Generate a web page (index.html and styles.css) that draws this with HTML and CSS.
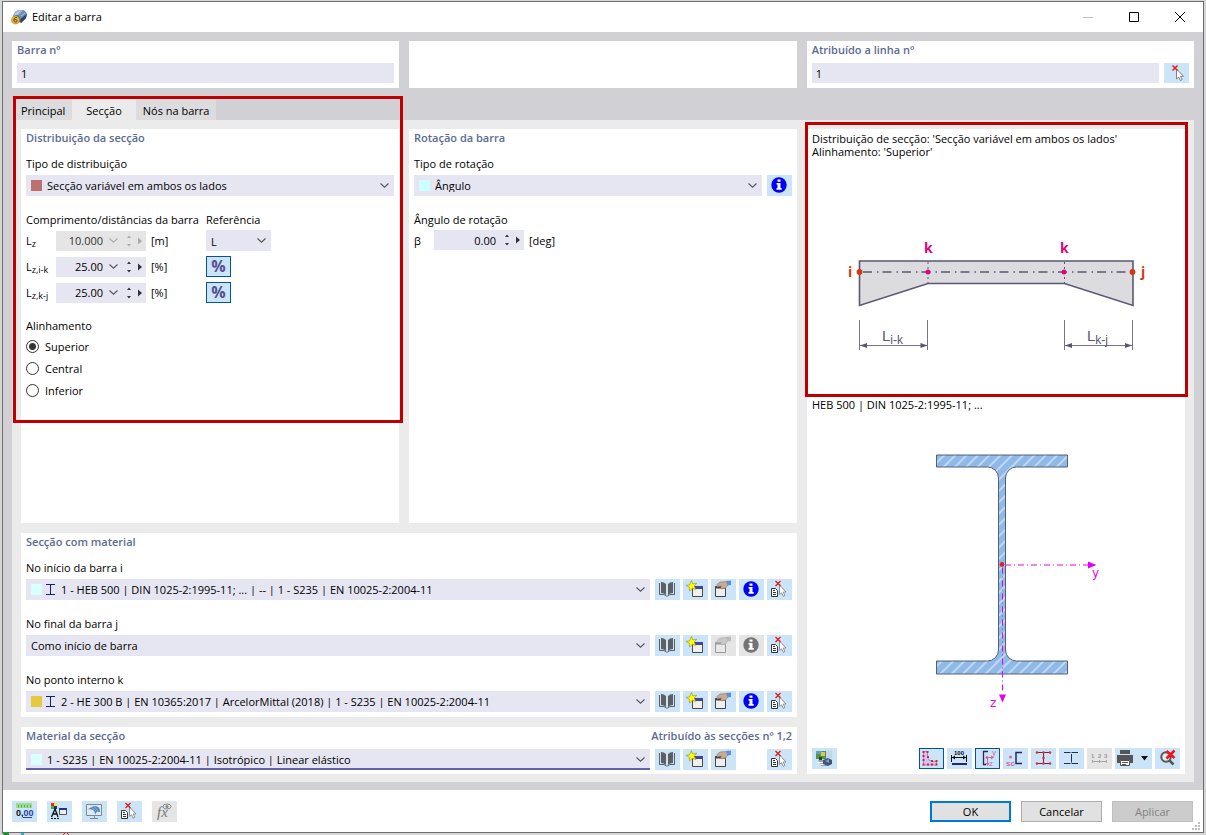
FILE: index.html
```html
<!DOCTYPE html>
<html lang="pt">
<head>
<meta charset="utf-8">
<title>Editar a barra</title>
<link rel="stylesheet" href="styles.css">
</head>
<body>
<svg class="defs" width="0" height="0" aria-hidden="true">
  <symbol id="i-chev" viewBox="0 0 9 5"><path d="M.5 .5 4.5 4.2 8.5 .5" fill="none" stroke="currentColor" stroke-width="1.1"/></symbol>
  <symbol id="i-updown" viewBox="0 0 6 14"><path d="M1 4 3 1.500 5 4zM1 10 3 12.500 5 10z" fill="currentColor"/></symbol>
  <symbol id="i-right" viewBox="0 0 4 8"><path d="M0 0.500 4 4 0 7.500z" fill="currentColor"/></symbol>
  <symbol id="i-ibeam" viewBox="0 0 9 11"><path d="M0 .5h9M0 10.500h9M4.500 .5v10" fill="none" stroke="#1b1b86"/></symbol>
  <symbol id="i-info" viewBox="0 0 25 21"><circle cx="12" cy="10" r="7.700" fill="currentColor"/><path d="M10.500 4.500h3v2.200h-3zM9.500 8h4v5h1.200v1.700h-5.200V13h1V9.600h-1z" fill="#fff"/></symbol>
  <symbol id="i-book" viewBox="0 0 25 21"><path d="M6 3q3 0 5 2v11q-2-2-5-2zM18 3q-3 0-5 2v11q2-2 5-2z" fill="#5d6063"/><path d="M4.500 4v11.500h4.500l2.500 1.500h1l2.500-1.500h4.500V4" fill="none" stroke="#5d6063"/></symbol>
  <symbol id="i-new" viewBox="0 0 25 21"><path d="M9.500 7.500h10v10h-10z" fill="#efefef" stroke="#4a4a4a"/><path d="M9 7h11v3H9z" fill="#4a4a4a"/><path d="M13 7.500h6.500v1.500H13z" fill="#3d3df0"/><path d="M8.500 1.500 9.800 5l4-.8-2.600 3 1.800 3.300-3.700-1.100L6.500 12l-.2-3.800L3 6.500l3.700-.8z" fill="#ff0" stroke="#8a8a30" stroke-width=".6"/></symbol>
  <symbol id="i-edit" viewBox="0 0 25 21"><path d="M4.500 7.500h10v10h-10z" fill="var(--paper,#efefef)" stroke="var(--ink,#444)"/><path d="M4 8.500h11" stroke="var(--ink,#444)" stroke-width="2"/><path d="M6 5.500 9 3l7-.5 1 3.500-3 3.500-2-.5-1 1-1.300-.5.500-2.500L6 8z" fill="var(--skin,#c9aa94)" stroke="var(--ink2,#857468)" stroke-width=".6"/><path d="m15 2 5-.5V6l-3.500.5z" fill="var(--sleeve,#5c93d6)"/></symbol>
  <symbol id="i-cursor" viewBox="0 0 25 21"><path d="M12.500 6v10l2.200-2 1.700 3.500 1.800-.9-1.700-3.300h3z" fill="#fff" stroke="#777" stroke-width=".9"/><path d="m8.500 2.500 5 5m0-5-5 5" stroke="#e02020" stroke-width="1.500"/></symbol>
  <symbol id="i-pick" viewBox="0 0 25 21"><path d="M4.500 9.500h4l2 2v6h-6z" fill="#fff" stroke="#333"/><path d="M6 11.500h2m-2 2h3m-3 2h3" stroke="#333"/><path d="M12.500 6v9.500l2-1.800 1.700 3.600 1.700-.9-1.700-3.400h2.800z" fill="#fff" stroke="#888" stroke-width=".9"/><path d="m8.500 2 5 5m0-5-5 5" stroke="#e01818" stroke-width="1.300"/></symbol>
</svg>

<div class="window">
  <header class="titlebar">
    <svg class="app-icon" viewBox="0 0 16 16" aria-hidden="true"><path d="M2 7Q4 1 9 1l4 .5 3 4.500-1 3-5 5-4-2z" fill="#476287"/><path d="M2 7Q4 1 9 1l4 .5L7 6z" fill="#a6bcd8"/><path d="M7 6q1-4 5-4.500 3.500 0 4 4.500l-6 5z" fill="#6f90bb"/><path d="m9.500 10 6-5-.5 4-5 5z" fill="#2f4566"/><path d="m4 6 5-4m-3 4 5-4m-1 5 4-3" stroke="#d5e0ee" stroke-width=".6"/><circle cx="4.500" cy="11" r="4" fill="#e9bb3c" stroke="#a87f22" stroke-width=".6"/><path d="M6 8.700c-2-.6-3 .6-3 2.300 0 3 3.500 2.500 3 .6-.3-1.500-2.400-1.200-2.800-.2" fill="none" stroke="#5b4411"/></svg>
    <h1 class="title">Editar a barra</h1>
    <div class="win-buttons">
      <button type="button" class="win-btn" aria-label="Minimizar"><svg viewBox="0 0 10 10"><path d="M0 5.500h10" stroke="#bdbdbd"/></svg></button>
      <button type="button" class="win-btn" aria-label="Maximizar"><svg viewBox="0 0 10 10"><path d="M.5 .5h9v9h-9z" fill="none" stroke="#000"/></svg></button>
      <button type="button" class="win-btn" aria-label="Fechar"><svg viewBox="0 0 10 10"><path d="m0 0 10 10M10 0 0 10" stroke="#000"/></svg></button>
    </div>
  </header>

  <main class="content">
    <div class="top-row">
      <section class="card">
        <label class="heading" for="barra">Barra nº</label>
        <div class="line"><input class="text-input" id="barra" value="1"></div>
      </section>
      <section class="card"></section>
      <section class="card">
        <label class="heading" for="linha">Atribuído a linha nº</label>
        <div class="line"><input class="text-input" id="linha" value="1"><button type="button" class="tool" aria-label="Selecionar linha"><svg><use href="#i-cursor"/></svg></button></div>
      </section>
    </div>

    <nav class="tabs">
      <button type="button" class="tab">Principal</button>
      <button type="button" class="tab active">Secção</button>
      <button type="button" class="tab">Nós na barra</button>
    </nav>

    <div class="panel">
      <section class="card dist">
        <h2 class="heading">Distribuição da secção</h2>
        <label class="label first" for="tipo-dist">Tipo de distribuição</label>
        <div class="combo one-mark">
          <select id="tipo-dist"><option>Secção variável em ambos os lados</option></select>
          <span class="marks"><i class="swatch red"></i></span><svg class="chev"><use href="#i-chev"/></svg>
        </div>
        <div class="lengths">
          <span class="label span3">Comprimento/distâncias da barra</span><label class="label" for="ref">Referência</label>
          <label for="lz">L<sub>z</sub></label>
          <div class="spin off"><input id="lz" value="10.000" disabled><svg class="chev"><use href="#i-chev"/></svg><svg class="updown"><use href="#i-updown"/></svg><svg class="right"><use href="#i-right"/></svg></div>
          <span class="unit">[m]</span>
          <div class="combo small"><select id="ref"><option>L</option></select><svg class="chev"><use href="#i-chev"/></svg></div>
          <label for="lzik">L<sub>z,i-k</sub></label>
          <div class="spin"><input id="lzik" value="25.00"><svg class="chev"><use href="#i-chev"/></svg><svg class="updown"><use href="#i-updown"/></svg><svg class="right"><use href="#i-right"/></svg></div>
          <span class="unit">[%]</span>
          <button type="button" class="tool pressed percent">%</button>
          <label for="lzkj">L<sub>z,k-j</sub></label>
          <div class="spin"><input id="lzkj" value="25.00"><svg class="chev"><use href="#i-chev"/></svg><svg class="updown"><use href="#i-updown"/></svg><svg class="right"><use href="#i-right"/></svg></div>
          <span class="unit">[%]</span>
          <button type="button" class="tool pressed percent">%</button>
        </div>
        <fieldset class="align">
          <legend class="label">Alinhamento</legend>
          <label class="radio"><input type="radio" name="al" checked>Superior</label>
          <label class="radio"><input type="radio" name="al">Central</label>
          <label class="radio"><input type="radio" name="al">Inferior</label>
        </fieldset>
        <div class="callout callout-form"></div>
      </section>

      <section class="card">
        <h2 class="heading">Rotação da barra</h2>
        <label class="label first" for="tipo-rot">Tipo de rotação</label>
        <div class="line">
          <div class="combo one-mark">
            <select id="tipo-rot"><option>Ângulo</option></select>
            <span class="marks"><i class="swatch cyan"></i></span><svg class="chev"><use href="#i-chev"/></svg>
          </div>
          <button type="button" class="tool info" aria-label="Informação"><svg><use href="#i-info"/></svg></button>
        </div>
        <div class="angle">
          <span class="label span3">Ângulo de rotação</span>
          <label for="beta">β</label>
          <div class="spin"><input id="beta" value="0.00"><svg class="updown"><use href="#i-updown"/></svg><svg class="right"><use href="#i-right"/></svg></div>
          <span class="unit">[deg]</span>
        </div>
      </section>

      <section class="card wide">
        <h2 class="heading">Secção com material</h2>
        <label class="label first" for="sec-i">No início da barra i</label>
        <div class="line">
          <div class="combo two-marks">
            <select id="sec-i"><option>1 - HEB 500 | DIN 1025-2:1995-11; ... | -- | 1 - S235 | EN 10025-2:2004-11</option></select>
            <span class="marks"><i class="swatch pale"></i><svg class="ibeam"><use href="#i-ibeam"/></svg></span><svg class="chev"><use href="#i-chev"/></svg>
          </div>
          <div class="tools">
            <button type="button" class="tool" aria-label="Biblioteca"><svg><use href="#i-book"/></svg></button>
            <button type="button" class="tool" aria-label="Nova secção"><svg><use href="#i-new"/></svg></button>
            <button type="button" class="tool" aria-label="Editar secção"><svg><use href="#i-edit"/></svg></button>
            <button type="button" class="tool info" aria-label="Informação"><svg><use href="#i-info"/></svg></button>
            <button type="button" class="tool" aria-label="Selecionar"><svg><use href="#i-pick"/></svg></button>
          </div>
        </div>
        <label class="label next" for="sec-j">No final da barra j</label>
        <div class="line">
          <div class="combo">
            <select id="sec-j"><option>Como início de barra</option></select><svg class="chev"><use href="#i-chev"/></svg>
          </div>
          <div class="tools">
            <button type="button" class="tool" aria-label="Biblioteca"><svg><use href="#i-book"/></svg></button>
            <button type="button" class="tool" aria-label="Nova secção"><svg><use href="#i-new"/></svg></button>
            <button type="button" class="tool" disabled aria-label="Editar secção"><svg><use href="#i-edit"/></svg></button>
            <button type="button" class="tool info" disabled aria-label="Informação"><svg><use href="#i-info"/></svg></button>
            <button type="button" class="tool" aria-label="Selecionar"><svg><use href="#i-pick"/></svg></button>
          </div>
        </div>
        <label class="label next" for="sec-k">No ponto interno k</label>
        <div class="line">
          <div class="combo two-marks">
            <select id="sec-k"><option>2 - HE 300 B | EN 10365:2017 | ArcelorMittal (2018) | 1 - S235 | EN 10025-2:2004-11</option></select>
            <span class="marks"><i class="swatch gold"></i><svg class="ibeam"><use href="#i-ibeam"/></svg></span><svg class="chev"><use href="#i-chev"/></svg>
          </div>
          <div class="tools">
            <button type="button" class="tool" aria-label="Biblioteca"><svg><use href="#i-book"/></svg></button>
            <button type="button" class="tool" aria-label="Nova secção"><svg><use href="#i-new"/></svg></button>
            <button type="button" class="tool" aria-label="Editar secção"><svg><use href="#i-edit"/></svg></button>
            <button type="button" class="tool info" aria-label="Informação"><svg><use href="#i-info"/></svg></button>
            <button type="button" class="tool" aria-label="Selecionar"><svg><use href="#i-pick"/></svg></button>
          </div>
        </div>
      </section>

      <section class="card wide">
        <div class="heading-row"><label class="heading" for="mat">Material da secção</label><span class="heading">Atribuído às secções nº 1,2</span></div>
        <div class="line">
          <div class="combo one-mark focused">
            <select id="mat"><option>1 - S235 | EN 10025-2:2004-11 | Isotrópico | Linear elástico</option></select>
            <span class="marks"><i class="swatch pale"></i></span><svg class="chev"><use href="#i-chev"/></svg>
          </div>
          <div class="tools">
            <button type="button" class="tool" aria-label="Biblioteca"><svg><use href="#i-book"/></svg></button>
            <button type="button" class="tool" aria-label="Novo material"><svg><use href="#i-new"/></svg></button>
            <button type="button" class="tool" aria-label="Editar material"><svg><use href="#i-edit"/></svg></button>
            <button type="button" class="tool last" aria-label="Selecionar"><svg><use href="#i-pick"/></svg></button>
          </div>
        </div>
      </section>

      <aside class="card preview">
        <div class="preview-dist">
          <p class="caption">Distribuição de secção: 'Secção variável em ambos os lados'<br>Alinhamento: 'Superior'</p>
          <svg class="drawing" viewBox="807 158 378 239" role="img" aria-label="Secção variável em ambos os lados">
            <path d="M859.500 261h273.500v44.500L1064.500 283.500H928l-68.500 22z" fill="#dcdbe0" stroke="#5a5870" stroke-width="1.600"/>
            <path d="M928 262v21M1064.500 262v21" stroke="#5a5870" stroke-dasharray="2 3"/>
            <path d="M863 272h266" stroke="#5a5870" stroke-width="1.700" stroke-dasharray="9 5 1.500 4"/>
            <circle cx="859.500" cy="272" r="2.900" fill="#d03a10"/><circle cx="1132.500" cy="272" r="2.900" fill="#d03a10"/>
            <circle cx="928" cy="272" r="2.500" fill="#e0047c"/><circle cx="1064" cy="272" r="2.500" fill="#e0047c"/>
            <g class="node-k"><text x="924" y="253">k</text><text x="1060" y="253">k</text></g>
            <g class="node-end"><text x="848" y="277">i</text><text x="1141" y="277">j</text></g>
            <path d="M859.500 320v30M927.500 320v30M1064.500 320v30M1132.500 320v30M860 345.500h67M1065 345.500h67" stroke="#777588"/>
            <path d="m860 345.500 7-2.500v5zM927.500 345.500l-7-2.500v5zM1065 345.500l7-2.500v5zM1132 345.500l-7-2.500v5z" fill="#5a5870"/>
            <g class="dim"><text x="882" y="341">L<tspan class="sub" dy="3">i-k</tspan></text><text x="1087" y="341">L<tspan class="sub" dy="3">k-j</tspan></text></g>
          </svg>
          <div class="callout callout-preview"></div>
        </div>
        <p class="caption">HEB 500 | DIN 1025-2:1995-11; ...</p>
        <svg class="drawing" viewBox="807 415 378 330" role="img" aria-label="HEB 500">
          <defs><pattern id="hatch" width="8" height="8" patternUnits="userSpaceOnUse" patternTransform="translate(1002 460) rotate(45)"><path d="M0 0h8v8H0z" fill="#8fb9e8"/><path d="M4 0v8" stroke="#f2f8ff" stroke-width="1"/></pattern></defs>
          <path d="M936.500 455.500h131v12h-51a11 11 0 0 0-11 11v172a11 11 0 0 0 11 11h51v13h-131v-13h51a11 11 0 0 0 11-11v-172a11 11 0 0 0-11-11h-51z" fill="url(#hatch)" stroke="#55606c"/>
          <path d="M1005 565.500h83M1002.500 568v126" stroke="#e400f0" stroke-dasharray="6 3 1 3"/>
          <path d="m1088 562 8.500 3.500-8.500 3.500zM999 695l3.500 8 3.500-8z" fill="#e400f0"/>
          <circle cx="1002" cy="565" r="2.400" fill="#d8232a"/>
          <g class="axis"><text x="1092" y="577">y</text><text x="990" y="707">z</text></g>
        </svg>
        <div class="preview-tools">
          <button type="button" class="tool" aria-label="Renderização"><svg viewBox="0 0 25 21"><path d="M4 3h10v8H4z" fill="#5c8f4f"/><path d="M4 3h6v3H4z" fill="#54a7b5"/><path d="M9 4h4v4H9z" fill="#d9cc4a"/><path d="M7 9h3v3H7z" fill="#1d4a27"/><path d="M14 2.500h6v8h-6z" fill="#c1d6e8"/><path d="M6 12h9v6H9z" fill="#8da4b8"/><path d="M5 14h9v1H5zM8 16h8v1H8z" fill="#fff"/><path d="m11 12 5-2 4 2v4l-4 2-5-2z" fill="#43566e"/><path d="m13 13 4-2v4z" fill="#6fa0dc"/></svg></button>
          <div class="tools">
            <button type="button" class="tool pressed" aria-label="Contorno"><svg viewBox="0 0 25 21"><path d="M4.500 3.500h4V9q.5 4 5 4.500h4V17h-13z" fill="#cfc3f8" stroke="#8d84b8" stroke-width=".8"/><path d="M3.500 3h2v2h-2zM7.500 3h2v2h-2zM3.500 7h2v2h-2zM3.500 11h2v2h-2zM3.500 15.500h2v2h-2zM8 15.500h2v2H8zM12 15.500h2v2h-2zM16.500 15.500h2v2h-2zM16.500 12h2v2h-2zM12 12h2v2h-2zM8 8h2v2H8z" fill="#e2202c"/></svg></button>
            <button type="button" class="tool" aria-label="Dimensões"><svg viewBox="0 0 25 21"><text class="tiny" x="7" y="7">100</text><path d="M4.500 7v7M19.500 7v7M5 9.500h14" stroke="#111"/><path d="m5 9.500 3-2v4zM19 9.500l-3-2v4z" fill="#111"/><path d="M5 16h15" stroke="#262a5b" stroke-width="2"/></svg></button>
            <button type="button" class="tool pressed" aria-label="Eixos principais"><svg viewBox="0 0 25 21"><path d="M13 3.500H8.500v13H11" fill="none" stroke="#262a5b" stroke-width="1.300"/><path d="M11.500 9.500h6M12.500 9v8" stroke="#cf6aa5"/><path d="m16 7.500 3 2-3 2zM10.500 15l2 3 2-3z" fill="#cf6aa5"/><circle cx="12" cy="9.500" r="1.500" fill="#cf6aa5"/><text class="tiny pink" x="17" y="7">y</text><text class="tiny pink" x="14" y="18">z</text></svg></button>
            <button type="button" class="tool" aria-label="Centro de corte"><svg viewBox="0 0 25 21"><path d="M19 4.500h-6v11h6" fill="none" stroke="#262a5b" stroke-width="1.500"/><circle cx="7.500" cy="9" r="1.500" fill="#cf6aa5"/><text class="tiny pink sc" x="3" y="18">sc</text></svg></button>
            <button type="button" class="tool" aria-label="Pontos"><svg viewBox="0 0 25 21"><path d="M6 4.500h13M6 15.500h13M12.500 4.500v11" stroke="#5b2a4c"/><g fill="#ff2020"><circle cx="6" cy="4.500" r="1.300"/><circle cx="12.500" cy="4.500" r="1.300"/><circle cx="19" cy="4.500" r="1.300"/><circle cx="12.500" cy="10" r="1.300"/><circle cx="6" cy="15.500" r="1.300"/><circle cx="12.500" cy="15.500" r="1.300"/><circle cx="19" cy="15.500" r="1.300"/></g></svg></button>
            <button type="button" class="tool" aria-label="Linhas"><svg viewBox="0 0 25 21"><path d="M5 4.500h6.500M12.500 4.500H19M5 15.500h6.500M12.500 15.500H19M12.500 6v8.500" stroke="#262a5b"/></svg></button>
            <button type="button" class="tool" disabled aria-label="Numeração"><svg viewBox="0 0 25 21"><text class="tiny gray" x="4" y="10">1</text><text class="tiny gray" x="11" y="10">2</text><text class="tiny gray" x="17" y="10">3</text><path d="M5 13.500h15M5.500 12v3M12.500 12v3M19.500 12v3" stroke="#a5a5a5"/></svg></button>
            <button type="button" class="tool print" aria-label="Imprimir"><svg viewBox="0 0 37 21"><path d="M5 2h10v4H5zM2 7h16v8h-3v-3H5v3H2z" fill="#555"/><path d="M5.500 12.500h9v5h-9z" fill="#fff" stroke="#555"/><path d="M7 14.500h6M7 16.500h4" stroke="#555"/><path d="M26 8h7l-3.500 4.500z" fill="#111"/></svg></button>
            <button type="button" class="tool" aria-label="Repor vista"><svg viewBox="0 0 25 21"><circle cx="11" cy="9" r="4.700" fill="#e1edf7" stroke="#555" stroke-width="2"/><path d="m14 12 4.500 4.500" stroke="#555" stroke-width="2.500"/><path d="m11.500 3 8 7m0-7.500-8 8" stroke="#f01414" stroke-width="2.600"/></svg></button>
          </div>
        </div>
      </aside>
    </div>
  </main>

  <footer class="footer">
    <div class="footer-tools">
      <button type="button" class="tool" aria-label="Unidades"><svg viewBox="0 0 25 21"><path d="M4 2h16v5H4z" fill="#9be08c"/><path d="M6.500 4v2.500M9.500 4v2.500M12.500 4v2.500M15.500 4v2.500M18.500 4v2.500" stroke="#55994c" stroke-width=".8"/><text class="digits" x="4" y="15">0,<tspan fill="#2b3f9e">00</tspan></text><path d="M11 16.500h9" stroke="#2b3f9e"/></svg></button>
      <button type="button" class="tool" aria-label="Propriedades de visualização"><svg viewBox="0 0 25 21"><path d="M4 2h3v3H4z" fill="#e22"/><path d="M7 2h3v3H7z" fill="#ee2"/><path d="M4 5h3v3H4z" fill="#3b3"/><path d="M7 5h3v3H7z" fill="#22d"/><path d="m4.500 16 3.500-8 3 8M6 13h4" fill="none" stroke="#111" stroke-width="1.300"/><path d="M4 17.500h9" stroke="#111" stroke-dasharray="2 1"/><path d="M12.500 7.500h7v6h-7z" fill="#eee" stroke="#555"/><path d="M12 8h8" stroke="#22338f" stroke-width="2"/></svg></button>
      <button type="button" class="tool" aria-label="Vista"><svg viewBox="0 0 25 21"><path d="M4.500 3.500h15v11h-15z" fill="#dceafa" stroke="#7e8790"/><path d="M12.500 15v2.500M8 17.500h8" stroke="#7e8790"/><path d="M6 8.500q5-5.500 10-2.500 2 1 2 5l-3-.5-2 3q0-4-3-5-2-.5-4 0z" fill="#5184b8"/><path d="m9 6 5 4m-2-5 4 5" stroke="#a6c8e8" stroke-width=".7"/></svg></button>
      <button type="button" class="tool" aria-label="Selecionar objeto"><svg><use href="#i-pick"/></svg></button>
      <button type="button" class="tool" disabled aria-label="Fórmulas"><svg viewBox="0 0 25 21"><text class="formula" x="5" y="16">fx</text><ellipse cx="15" cy="5.500" rx="4" ry="2.500" fill="none" stroke="#888"/><circle cx="15" cy="5.500" r="1.500" fill="#888"/></svg></button>
    </div>
    <div class="footer-buttons">
      <button type="button" class="btn default">OK</button>
      <button type="button" class="btn">Cancelar</button>
      <button type="button" class="btn" disabled>Aplicar</button>
    </div>
    <svg class="grip" viewBox="0 0 8 8" aria-hidden="true"><path d="M6 0h2v2H6zM3 3h2v2H3zM6 3h2v2H6zM0 6h2v2H0zM3 6h2v2H3zM6 6h2v2H6z" fill="#bdbdbd"/></svg>
  </footer>
</div>
<svg class="backdrop" width="80" height="2" aria-hidden="true"><path d="M0 0h7v2H2z" fill="#0a9a1c"/><path d="M19 0h3v2h-3z" fill="#18b8c0"/><path d="m61 2 2-2m2 0 2 2" stroke="#c22"/></svg>
</body>
</html>
```
FILE: styles.css
```css
* { box-sizing: border-box; }
body {
  margin: 0;
  padding: 1px 2px 0;
  min-height: 100vh;
  display: flex;
  flex-direction: column;
  background: #d6d6d6;
  font: 11px/13px "Open Sans", "Noto Sans", sans-serif;
  color: #000;
}
button, input, select { font: inherit; color: inherit; }
h1, h2, p, fieldset { margin: 0; padding: 0; border: 0; font-weight: normal; }
svg { display: block; }
.defs { position: absolute; }
.backdrop { flex: none; }

.window {
  flex: 1;
  display: flex;
  flex-direction: column;
  background: #fff;
  border: 1px solid #6e6e70;
}
.titlebar { display: flex; align-items: center; height: 30px; padding-left: 8px; gap: 5px; }
.app-icon { width: 16px; height: 16px; }
.title { flex: 1; font-size: 11px; line-height: 16px; }
.win-buttons { display: flex; }
.win-btn { width: 46px; height: 30px; border: 0; background: none; padding: 0; display: grid; place-items: center; }
.win-btn svg { width: 10px; height: 10px; }

.content {
  flex: 1;
  display: flex;
  flex-direction: column;
  background: #d1d0d5;
  padding: 9px 9px 8px;
}
.top-row { display: grid; grid-template-columns: 1fr 1fr 1fr; gap: 10px; }
.card { background: #fff; padding: 0 5px 5px; min-width: 0; }
.heading { display: block; font-size: 11px; font-weight: 600; line-height: 18px; color: #5c6b94; }
.heading-row { display: flex; justify-content: space-between; }
.heading + .line, .heading-row + .line { margin-top: 4px; }
.line { display: flex; gap: 5px; }
.text-input { flex: 1; min-width: 0; height: 20px; border: 0; padding: 0 4px; background: #e6e6f2; }
.top-row .tool { height: 20px; }

.tabs { display: flex; margin-top: 11px; }
.tab { height: 21px; border: 0; padding: 2px 7px 0; background: #dcdcde; text-align: center; }
.tab:first-child { padding-left: 9px; }
.tab.active { background: #ebebeb; padding: 2px 14px 0; }

.panel {
  flex: 1;
  display: grid;
  grid-template-columns: 378fr 388fr 378fr;
  grid-template-rows: 1fr auto auto;
  gap: 10px;
  padding: 9px 9px 8px;
  background: #ebebeb;
}
.wide { grid-column: 1 / 3; }
.wide:last-of-type { padding-bottom: 4px; }
.preview { grid-column: 3; grid-row: 1 / 4; display: flex; flex-direction: column; }
.dist { position: relative; }

.label { display: block; line-height: 21px; }
.label.first { margin-top: 6px; margin-bottom: 1px; }
.label.next { margin-top: 13px; margin-bottom: 1px; }

.combo { flex: 1; min-width: 0; height: 21px; display: grid; align-items: center; background: #e6e6f2; }
.combo > * { grid-area: 1 / 1; }
.combo select { width: 100%; height: 21px; border: 0; padding: 0 20px 1px 5px; background: none; appearance: none; border-radius: 0; }
.combo.small select { padding-top: 1px; padding-bottom: 0; }
.combo.one-mark select { padding-left: 21px; }
.combo.two-marks select { padding-left: 35px; }
.combo.focused { border-bottom: 2px solid #6462ac; }
.marks { justify-self: start; display: flex; align-items: center; gap: 4px; padding-left: 5px; pointer-events: none; }
.swatch { width: 11px; height: 11px; }
.swatch.red { background: #bc7070; }
.swatch.cyan { background: #ccffff; }
.swatch.pale { background: #d9ffff; }
.swatch.gold { background: #e4ca3c; }
.ibeam { width: 9px; height: 11px; }
.chev { width: 9px; height: 5px; color: #555; pointer-events: none; }
.combo .chev { justify-self: end; margin-right: 5px; }

.lengths { display: grid; grid-template-columns: 30px 95px 55px 65px; row-gap: 5px; align-items: center; margin-top: 13px; }
.lengths > .label { margin-bottom: -5px; }
.angle { display: grid; grid-template-columns: 20px 95px auto; row-gap: 0; align-items: center; margin-top: 13px; }
.span3 { grid-column: 1 / 4; white-space: nowrap; }
sub { font-size: 9px; line-height: 9px; vertical-align: -2px; }
.spin { width: 90px; height: 20px; display: flex; align-items: center; padding-right: 4px; background: #e6e6f2; color: #333; }
.spin input { flex: 1; min-width: 0; width: 0; height: 20px; border: 0; padding: 0; background: none; text-align: right; color: #000; }
.spin.off { background: #e5e5e5; color: #aaa; }
.spin.off input { color: #333; }
.spin .chev { flex: none; margin-left: 6px; }
.spin.off .chev { color: #aaa; }
.updown { flex: none; width: 6px; height: 14px; margin-left: 8px; }
.right { flex: none; width: 4px; height: 8px; margin-left: 6px; }
.align { margin-top: 13px; display: flex; flex-direction: column; }
.align .label { padding: 0; line-height: 20px; }
.radio { display: flex; align-items: center; gap: 6px; height: 20px; margin-bottom: 2px; }
.radio input { appearance: none; width: 13px; height: 13px; margin: 0; border: 1px solid #333; border-radius: 50%; background: #fff; }
.radio input:checked { background: radial-gradient(circle, #333 3px, #fff 4px); }

.tools { display: flex; gap: 3px; }
.tool { flex: none; width: 25px; height: 21px; border: 0; padding: 0; background: #cce4f7; overflow: hidden; }
.tool svg { width: 25px; height: 21px; }
.tool:disabled { background: #e5e5e5; --paper: #e9e9e9; --ink: #999; --ink2: #aaa; --skin: #c8c8c8; --sleeve: #bbb; }
.tool.last { margin-left: 28px; }
.info { color: #0000f5; }
.info:disabled { color: #747474; }
.pressed { border: 1px solid #0054a0; }
.pressed svg { margin: -1px; }
.percent { color: #554f92; font-size: 16px; font-weight: 700; line-height: 19px; }
.print { width: 37px; }
.print svg { width: 37px; }

.preview-dist { position: relative; padding-top: 3px; }
.caption { line-height: 13px; }
.preview-dist .caption { height: 26px; }
.preview > .caption { padding-top: 1px; }
.drawing { width: calc(100% + 10px); margin: 0 -5px; }
.preview > .drawing { flex: 1; min-height: 0; }
.preview-tools { display: flex; justify-content: space-between; }
.node-k { font: 700 14px "Open Sans", sans-serif; fill: #e0047c; }
.node-end { font: 700 14px "Open Sans", sans-serif; fill: #d03a10; }
.dim { font: 15px "Liberation Sans", sans-serif; fill: #5a5870; }
.sub { font-size: 12px; }
.axis { font: 12px "DejaVu Sans", sans-serif; fill: #e400f0; }
.tiny { font: bold 6px "Liberation Sans", sans-serif; fill: #111; }
.tiny.pink { font-size: 8px; font-weight: normal; fill: #cf6aa5; }
.tiny.sc { font-weight: bold; }
.tiny.gray { fill: #999; }
.digits { font: bold 9px "Liberation Sans", sans-serif; fill: #111; }
.formula { font: italic 15px "Liberation Serif", serif; fill: #777; }

.callout { position: absolute; border: 3px solid #c00000; pointer-events: none; }
.callout-form { left: -8px; right: -4px; top: -33px; height: 327px; }
.callout-preview { left: -7px; right: -8px; top: -7px; bottom: 0; }

.footer { position: relative; display: flex; justify-content: space-between; align-items: center; height: 42px; padding: 0 10px 0 9px; }
.footer-tools, .footer-buttons { display: flex; gap: 10px; }
.btn { width: 81px; height: 21px; border: 1px solid #adadad; background: #e1e1e1; padding: 0; }
.btn.default { border: 2px solid #0078d7; }
.btn:disabled { background: #ccc; border-color: #bfbfbf; color: #838383; }
.grip { position: absolute; right: 3px; bottom: 2px; width: 8px; height: 8px; }
```
